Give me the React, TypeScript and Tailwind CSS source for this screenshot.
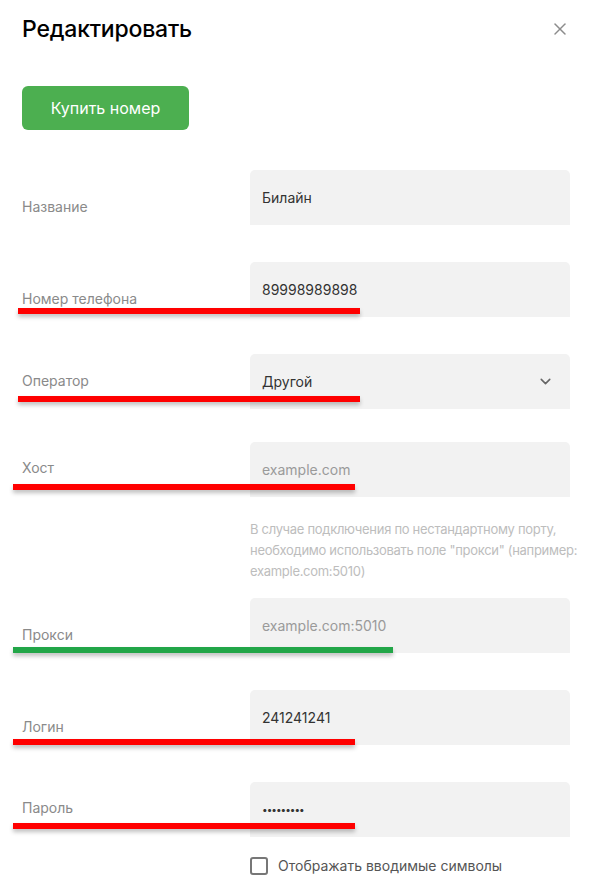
import { ChevronDown, X } from 'lucide-react';

type Mark = { top: string; left: string; width: string; color: string };

type Field = {
  label: string;
  value?: string;
  placeholder?: string;
  labelPad: string;
  gap: string;
  select?: boolean;
  mark?: Mark;
};

const fields: Field[] = [
  { label: 'Название', value: 'Билайн', labelPad: 'pt-[27px]', gap: 'mt-[40px]' },
  {
    label: 'Номер телефона',
    value: '89998989898',
    labelPad: 'pt-[27px]',
    gap: 'mt-[37px]',
    mark: { top: 'top-[46px]', left: 'left-[-4px]', width: 'w-[342px]', color: 'bg-[#ff0000]' },
  },
  {
    label: 'Оператор',
    value: 'Другой',
    labelPad: 'pt-[17px]',
    gap: 'mt-[37px]',
    select: true,
    mark: { top: 'top-[42px]', left: 'left-[-4px]', width: 'w-[342px]', color: 'bg-[#ff0000]' },
  },
  {
    label: 'Хост',
    placeholder: 'example.com',
    labelPad: 'pt-[16px]',
    gap: 'mt-[33px]',
    mark: { top: 'top-[42px]', left: 'left-[-9px]', width: 'w-[342px]', color: 'bg-[#ff0000]' },
  },
];

const fields2: Field[] = [
  {
    label: 'Прокси',
    placeholder: 'example.com:5010',
    labelPad: 'pt-[27px]',
    gap: 'mt-[16px]',
    mark: { top: 'top-[49px]', left: 'left-[-9px]', width: 'w-[380px]', color: 'bg-[#22a648]' },
  },
  {
    label: 'Логин',
    value: '241241241',
    labelPad: 'pt-[27px]',
    gap: 'mt-[37px]',
    mark: { top: 'top-[49px]', left: 'left-[-9px]', width: 'w-[342px]', color: 'bg-[#ff0000]' },
  },
  {
    label: 'Пароль',
    value: '•••••••••',
    labelPad: 'pt-[16px]',
    gap: 'mt-[37px]',
    mark: { top: 'top-[41px]', left: 'left-[-9px]', width: 'w-[342px]', color: 'bg-[#ff0000]' },
  },
];

function Row({ f }: { f: Field }) {
  return (
    <div className={`relative flex ${f.gap}`}>
      <div className={`w-[228px] text-[14px] leading-[20px] text-[#8a8a8a] ${f.labelPad}`}>{f.label}</div>
      <div className="flex h-[55px] w-[320px] items-center justify-between rounded-t-[5px] bg-[#f2f2f2] px-[12px] text-[14px]">
        {f.value ? (
          <span className={f.label === 'Пароль' ? 'text-[10px] tracking-[-1px] text-[#333]' : 'text-[#333]'}>{f.value}</span>
        ) : (
          <span className="text-[#9a9a9a]">{f.placeholder}</span>
        )}
        {f.select && <ChevronDown className="mr-[4px] h-[17px] w-[17px] text-[#666]" strokeWidth={2.2} />}
      </div>
      {f.mark && (
        <div
          className={`absolute h-[6px] shadow-[0_3px_4px_rgba(0,0,0,0.25)] ${f.mark.top} ${f.mark.left} ${f.mark.width} ${f.mark.color}`}
        />
      )}
    </div>
  );
}

export default function App() {
  return (
    <div className="min-h-[895px] w-[594px] bg-white px-[22px] pt-[16px] font-['Inter','Noto_Sans',sans-serif]">
      <div className="flex items-center justify-between">
        <h1 className="text-[23px] font-medium leading-[26px] tracking-[-0.2px] text-black">Редактировать</h1>
        <X className="mr-[2px] h-[20px] w-[20px] text-[#8c8c8c]" strokeWidth={1.8} />
      </div>

      <button className="mt-[44px] h-[44px] w-[167px] rounded-[6px] bg-[#4caf50] text-[16px] text-white">
        Купить номер
      </button>

      {fields.map((f) => (
        <Row key={f.label} f={f} />
      ))}

      <p className="ml-[228px] mt-[22px] w-[336px] text-[13px] leading-[21px] tracking-[-0.3px] text-[#bdbdbd]">
        В случае подключения по нестандартному порту, необходимо использовать поле "прокси" (например:
        example.com:5010)
      </p>

      {fields2.map((f) => (
        <Row key={f.label} f={f} />
      ))}

      <label className="ml-[228px] mt-[18px] flex items-center gap-[10px] text-[14px] text-[#555]">
        <span className="h-[18px] w-[18px] rounded-[3px] border-2 border-[#777]" />
        Отображать вводимые символы
      </label>
    </div>
  );
}
